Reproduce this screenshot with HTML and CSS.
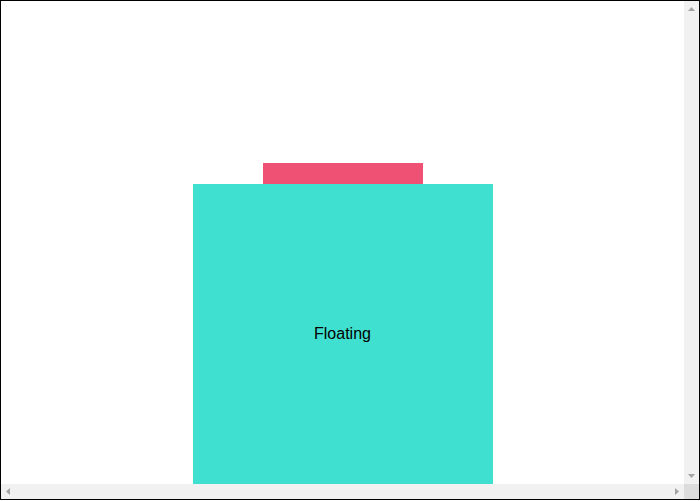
FILE: index.html
```html
<!DOCTYPE html>
<html>
<head>
<meta charset="utf-8">
<link rel="stylesheet" href="styles.css">
</head>
<body>
<div class="frame">
  <div class="stage">
    <div class="tab"></div>
    <div class="box">Floating</div>
  </div>
  <div class="vbar">
    <svg class="btn" width="15" height="15" viewBox="0 0 15 15"><polygon points="4,10 7.5,6 11,10" /></svg>
    <svg class="btn" width="15" height="15" viewBox="0 0 15 15"><polygon points="4,5 11,5 7.5,9" /></svg>
  </div>
  <div class="hbar">
    <svg class="btn" width="15" height="15" viewBox="0 0 15 15"><polygon points="9,4 9,11 5,7.5" /></svg>
    <svg class="btn" width="15" height="15" viewBox="0 0 15 15"><polygon points="6,4 6,11 10,7.5" /></svg>
  </div>
  <div class="corner"></div>
</div>
</body>
</html>
```
FILE: styles.css
```css
html, body {
  margin: 0;
  padding: 0;
  background: #fff;
}
.frame {
  width: 700px;
  height: 500px;
  box-sizing: border-box;
  border: 1px solid #000;
  overflow: hidden;
  display: grid;
  grid-template-columns: 1fr 15px;
  grid-template-rows: 1fr 15px;
  font-family: "Liberation Sans", Arial, sans-serif;
}
.stage {
  display: flex;
  flex-direction: column;
  align-items: center;
  padding-top: 162px;
  overflow: hidden;
}
.tab {
  width: 160px;
  height: 21px;
  background: #ef5175;
  flex: none;
}
.box {
  width: 300px;
  height: 300px;
  flex: none;
  background: #40e0d0;
  display: flex;
  align-items: center;
  justify-content: center;
  font-size: 16px;
  color: #000;
}
.vbar {
  background: #f1f1f1;
  display: flex;
  flex-direction: column;
  justify-content: space-between;
}
.hbar {
  background: #f1f1f1;
  display: flex;
  justify-content: space-between;
}
.btn {
  display: block;
  fill: #a3a3a3;
}
.corner {
  background: #dcdcdc;
}
```
